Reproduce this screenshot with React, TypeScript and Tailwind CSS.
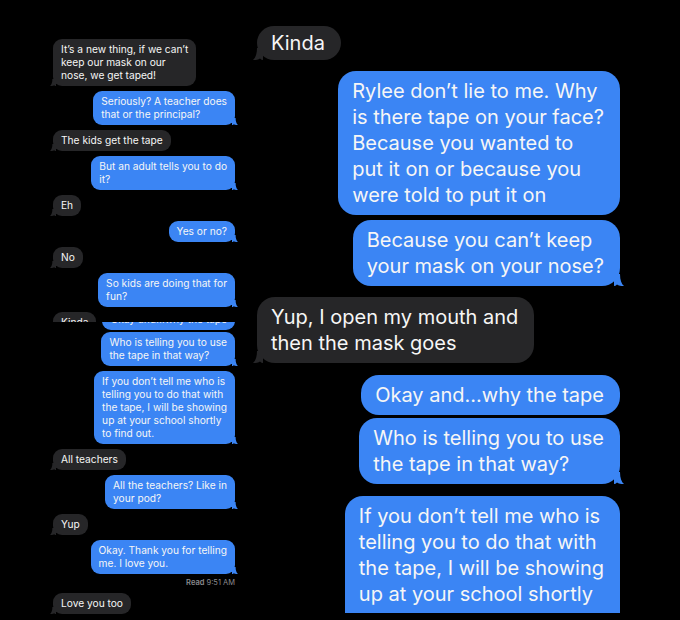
import { FC } from "react";

type Size = "sm" | "lg";

const Tail: FC<{ me: boolean; size: Size }> = ({ me, size }) => {
  const box =
    size === "lg"
      ? "absolute bottom-0 h-[12px] w-[10px]"
      : "absolute bottom-0 h-[7px] w-[6px]";
  const pos = me
    ? size === "lg"
      ? "right-[-4px]"
      : "right-[-3px]"
    : size === "lg"
      ? "left-[-4px]"
      : "left-[-3px]";
  const color = me ? "#3b85f4" : "#262628";
  return (
    <svg className={`${box} ${pos}`} viewBox="0 0 10 12" preserveAspectRatio="none">
      {me ? (
        <path d="M0 0 H6 C6 6 7.5 10 10 12 C7 12.3 4.5 11.5 3 10.5 C2 11.5 1 12 0 12 Z" fill={color} />
      ) : (
        <path d="M10 0 H4 C4 6 2.5 10 0 12 C3 12.3 5.5 11.5 7 10.5 C8 11.5 9 12 10 12 Z" fill={color} />
      )}
    </svg>
  );
};

const Bubble: FC<{
  lines: string[];
  me?: boolean;
  tail?: boolean;
  size: Size;
  tight?: boolean;
  className?: string;
}> = ({ lines, me = false, tail = true, size, tight = false, className = "" }) => {
  const sizing =
    size === "lg"
      ? `pl-[14px] pr-[16px] text-[20px] leading-[26px] rounded-[18px] ${tight ? "py-[4px]" : "py-[7px]"}`
      : "px-[8px] py-[4px] text-[10.2px] leading-[13px] rounded-[9px]";
  const tone = me ? "self-end bg-[#3b85f4]" : "self-start bg-[#262628]";
  return (
    <div className={`relative whitespace-nowrap text-[#f6f6f6] ${sizing} ${tone} ${className}`}>
      {lines.map((l, i) => (
        <div key={i}>{l}</div>
      ))}
      {tail && <Tail me={me} size={size} />}
    </div>
  );
};

export default function App() {
  return (
    <div
      className="flex h-[620px] w-[680px] overflow-hidden bg-black"
      style={{ fontFamily: "Inter, 'Liberation Sans', sans-serif" }}
    >
      {/* left screenshot, two pieces stuck together */}
      <div className="flex w-[245px] flex-col">
        <div className="flex h-[322px] flex-col gap-[5px] overflow-hidden pt-[39px] pl-[53px] pr-[10px]">
          <Bubble size="sm" lines={["It\u2019s a new thing, if we can\u2019t", "keep our mask on our", "nose, we get taped!"]} />
          <Bubble size="sm" me lines={["Seriously? A teacher does", "that or the principal?"]} />
          <Bubble size="sm" lines={["The kids get the tape"]} />
          <Bubble size="sm" me lines={["But an adult tells you to do", "it?"]} />
          <Bubble size="sm" lines={["Eh"]} />
          <Bubble size="sm" me lines={["Yes or no?"]} />
          <Bubble size="sm" lines={["No"]} />
          <Bubble size="sm" me lines={["So kids are doing that for", "fun?"]} />
          <Bubble size="sm" lines={["Kinda"]} />
        </div>
        <div className="flex flex-1 flex-col overflow-hidden pl-[53px] pr-[10px]">
          <Bubble size="sm" me tail={false} className="mt-[-13px]" lines={["Okay and...why the tape"]} />
          <Bubble size="sm" me className="mt-[2px]" lines={["Who is telling you to use", "the tape in that way?"]} />
          <Bubble
            size="sm"
            me
            className="mt-[5px]"
            lines={[
              "If you don\u2019t tell me who is",
              "telling you to do that with",
              "the tape, I will be showing",
              "up at your school shortly",
              "to find out.",
            ]}
          />
          <Bubble size="sm" className="mt-[5px]" lines={["All teachers"]} />
          <Bubble size="sm" me className="mt-[5px]" lines={["All the teachers? Like in", "your pod?"]} />
          <Bubble size="sm" className="mt-[5px]" lines={["Yup"]} />
          <Bubble size="sm" me className="mt-[5px]" lines={["Okay. Thank you for telling", "me. I love you."]} />
          <div className="mt-[4px] self-end text-[7.5px] leading-[10px] text-[#8a8a8e]">
            <span className="font-semibold">Read</span> 9:51 AM
          </div>
          <Bubble size="sm" className="mt-[5px]" lines={["Love you too"]} />
        </div>
      </div>

      {/* right screenshot, cut at the bottom */}
      <div className="flex h-[613px] flex-1 flex-col overflow-hidden pt-[26px] pl-[12px] pr-[60px]">
        <Bubble size="lg" tight lines={["Kinda"]} />
        <Bubble
          size="lg"
          me
          tail={false}
          className="mt-[11px]"
          lines={[
            "Rylee don\u2019t lie to me. Why",
            "is there tape on your face?",
            "Because you wanted to",
            "put it on or because you",
            "were told to put it on",
          ]}
        />
        <Bubble size="lg" me className="mt-[5px]" lines={["Because you can\u2019t keep", "your mask on your nose?"]} />
        <Bubble size="lg" className="mt-[11px]" lines={["Yup, I open my mouth and", "then the mask goes"]} />
        <Bubble size="lg" me tail={false} className="mt-[12px]" lines={["Okay and...why the tape"]} />
        <Bubble size="lg" me className="mt-[3px]" lines={["Who is telling you to use", "the tape in that way?"]} />
        <Bubble
          size="lg"
          me
          tail={false}
          className="mt-[12px] pb-[30px]"
          lines={[
            "If you don\u2019t tell me who is",
            "telling you to do that with",
            "the tape, I will be showing",
            "up at your school shortly",
          ]}
        />
      </div>
    </div>
  );
}
